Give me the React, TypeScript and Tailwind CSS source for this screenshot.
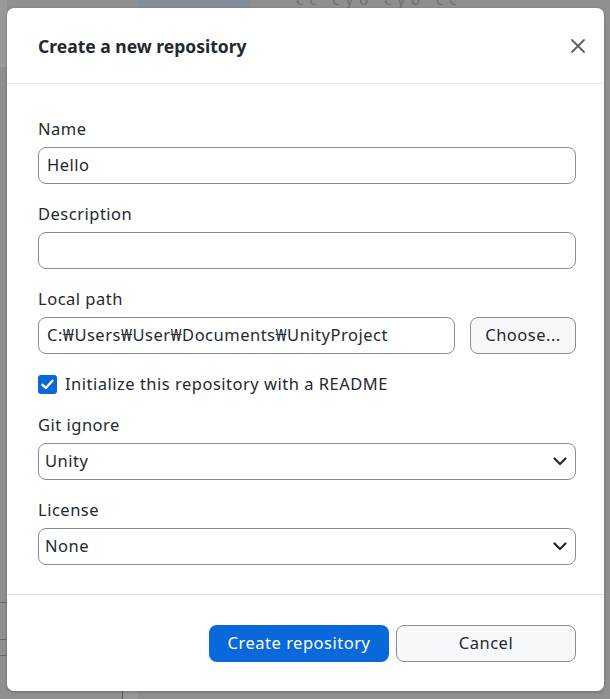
import React from "react";

const font = { fontFamily: '"Noto Sans", "Noto Sans CJK KR", sans-serif' };

function Field({ label, children }: { label: string; children: React.ReactNode }) {
  return (
    <div className="flex flex-col gap-[7px]">
      <label className="text-[16.5px] leading-[22px] tracking-[0.5px] text-[#24292f]">{label}</label>
      {children}
    </div>
  );
}

function TextBox({ value, className = "" }: { value?: string; className?: string }) {
  return (
    <div
      className={
        "flex h-[37px] items-center rounded-[8px] border border-[#868e98] bg-white px-[8px] text-[16.5px] tracking-[0.5px] text-[#24292f] " +
        className
      }
    >
      {value}
    </div>
  );
}

function Select({ value }: { value: string }) {
  return (
    <div className="flex h-[37px] items-center justify-between rounded-[8px] border border-[#868e98] bg-white pl-[6px] pr-[8px] text-[16.5px] tracking-[0.5px] text-[#24292f]">
      <span>{value}</span>
      <svg width="14" height="9" viewBox="0 0 14 9" fill="none">
        <path d="M1.5 1.5 7 7l5.5-5.5" stroke="#24292f" strokeWidth="2.2" strokeLinecap="round" strokeLinejoin="round" />
      </svg>
    </div>
  );
}

export default function App() {
  return (
    <div className="relative h-[699px] w-[610px] overflow-hidden bg-[#8f8f8f]" style={font}>
      {/* app behind the overlay */}
      <div className="absolute left-[138px] top-0 h-[10px] w-[112px] bg-[#848c97]" />
      <div className="absolute left-[296px] top-[-12px] text-[15px] tracking-[6px] text-[#6e6e6e]">cc cyo cyo cc</div>
      <div className="absolute left-0 top-0 h-[67px] w-[7px] bg-[#999999]" />
      <div className="absolute left-0 top-[602px] h-px w-[7px] bg-[#6a6a6a]" />
      <div className="absolute left-0 top-[639px] h-px w-[7px] bg-[#6a6a6a]" />
      <div className="absolute left-0 top-[655px] h-px w-[7px] bg-[#6a6a6a]" />
      <div className="absolute left-[122px] top-[690px] h-[9px] w-[16px] border-l border-[#5a5a5a] bg-[#969696]" />

      {/* dialog */}
      <div className="absolute left-[7px] top-[8px] flex h-[683px] w-[597px] flex-col rounded-[7px] bg-white shadow-[0_1px_3px_rgba(0,0,0,0.25)]">
        <div className="flex h-[76px] shrink-0 items-center justify-between border-b border-[#e1e4e8] pl-[31px] pr-[18px]">
          <h1 className="pt-[2px] text-[17.5px] font-bold text-[#24292f]">Create a new repository</h1>
          <svg width="16" height="16" viewBox="0 0 16 16" fill="none" className="mt-[1px]">
            <path d="M2 2l12 12M14 2 2 14" stroke="#57606a" strokeWidth="1.8" strokeLinecap="round" />
          </svg>
        </div>

        <div className="flex flex-1 flex-col gap-[19px] pl-[31px] pr-[28px] pt-[34px]">
          <Field label="Name">
            <TextBox value="Hello" />
          </Field>
          <Field label="Description">
            <TextBox />
          </Field>
          <Field label="Local path">
            <div className="flex gap-[15px]">
              <TextBox value="C:₩Users₩User₩Documents₩UnityProject" className="flex-1" />
              <button className="h-[37px] w-[106px] rounded-[8px] border border-[#868e98] bg-[#f6f8fa] text-[16.5px] tracking-[0.5px] text-[#24292f]">
                Choose...
              </button>
            </div>
          </Field>
          <div className="flex h-[22px] items-center gap-[8px]">
            <div className="flex h-[19px] w-[19px] items-center justify-center rounded-[3px] bg-[#0b68d8]">
              <svg width="13" height="11" viewBox="0 0 13 11" fill="none">
                <path d="M1.5 5.8 4.8 9 11.5 1.8" stroke="white" strokeWidth="2.4" strokeLinecap="round" strokeLinejoin="round" />
              </svg>
            </div>
            <span className="text-[16.5px] tracking-[0.5px] text-[#24292f]">Initialize this repository with a README</span>
          </div>
          <Field label="Git ignore">
            <Select value="Unity" />
          </Field>
          <Field label="License">
            <Select value="None" />
          </Field>
        </div>

        <div className="flex h-[97px] shrink-0 items-start justify-end gap-[7px] border-t border-[#e1e4e8] pr-[28px] pt-[30px]">
          <button className="h-[37px] w-[180px] rounded-[8px] bg-[#0969da] text-[16.5px] tracking-[0.5px] text-white">Create repository</button>
          <button className="h-[37px] w-[180px] rounded-[8px] border border-[#868e98] bg-[#f6f8fa] text-[16.5px] tracking-[0.5px] text-[#24292f]">
            Cancel
          </button>
        </div>
      </div>
    </div>
  );
}
